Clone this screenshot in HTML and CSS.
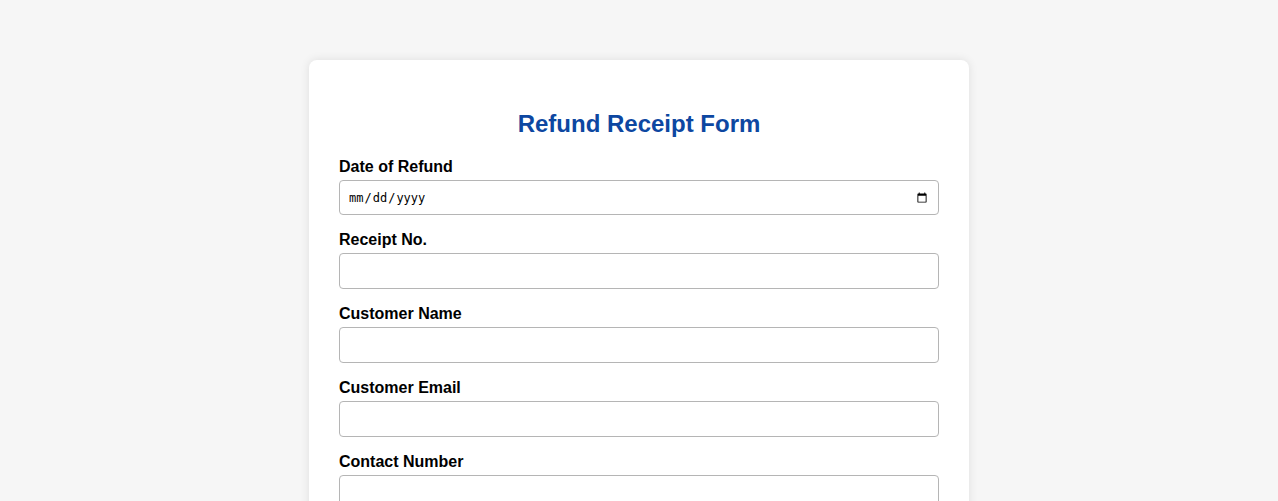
FILE: index.html
```html
<!DOCTYPE html>
<html lang="en">
<head>
<meta charset="utf-8">
<title>Refund Receipt Form</title>
<link rel="stylesheet" href="styles.css">
</head>
<body>
<div class="page">
  <form class="card">
    <h2 class="title">Refund Receipt Form</h2>
    <div class="group">
      <label class="label" for="date">Date of Refund</label>
      <input class="input date" type="date" id="date">
    </div>
    <div class="group">
      <label class="label" for="receipt">Receipt No.</label>
      <input class="input" type="text" id="receipt">
    </div>
    <div class="group">
      <label class="label" for="name">Customer Name</label>
      <input class="input" type="text" id="name">
    </div>
    <div class="group">
      <label class="label" for="email">Customer Email</label>
      <input class="input" type="email" id="email">
    </div>
    <div class="group">
      <label class="label" for="phone">Contact Number</label>
      <input class="input" type="tel" id="phone">
    </div>
  </form>
</div>
</body>
</html>
```
FILE: styles.css
```css
html, body {
  margin: 0;
  padding: 0;
  background: #f6f6f6;
  font-family: "Liberation Sans", Arial, sans-serif;
}
.page {
  display: flex;
  justify-content: center;
  padding-top: 60px;
}
.card {
  width: 660px;
  box-sizing: border-box;
  background: #ffffff;
  border-radius: 8px;
  box-shadow: 0 0 10px rgba(0, 0, 0, 0.1);
  padding: 30px;
}
.title {
  margin: 20px 0 20px;
  text-align: center;
  font-size: 24px;
  font-weight: bold;
  color: #0d47a1;
  line-height: 27px;
}
.group {
  margin-bottom: 15px;
}
.label {
  display: block;
  font-size: 16px;
  font-weight: bold;
  color: #000;
  line-height: 19px;
  margin-bottom: 4px;
}
.input {
  display: block;
  width: 100%;
  box-sizing: border-box;
  height: 36px;
  padding: 8px;
  border: 1px solid #b5b5b5;
  border-radius: 4px;
  font-family: "Liberation Sans", Arial, sans-serif;
  font-size: 16px;
  background: #fff;
}
.date {
  height: 35px;
  font-family: "DejaVu Sans Mono", "Liberation Mono", monospace;
  font-size: 12px;
}
```
